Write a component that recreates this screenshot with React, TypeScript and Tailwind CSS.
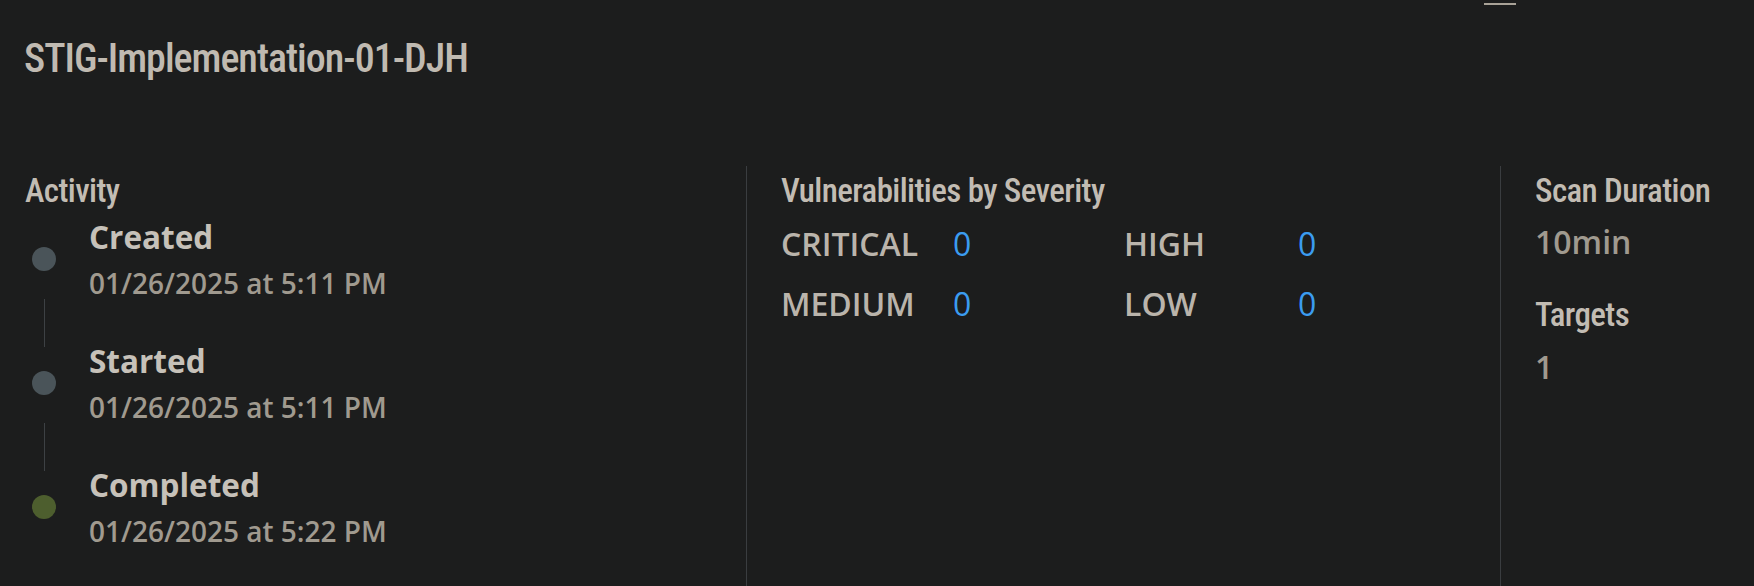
import React from "react";

const cond = "font-['Roboto',sans-serif] font-stretch-[75%] font-medium";
const body = "font-['Open_Sans','Noto_Sans',sans-serif]";

type Ev = { label: string; date: string; dot: string };

const events: Ev[] = [
  { label: "Created", date: "01/26/2025 at 5:11 PM", dot: "bg-[#4a5459]" },
  { label: "Started", date: "01/26/2025 at 5:11 PM", dot: "bg-[#4a5459]" },
  { label: "Completed", date: "01/26/2025 at 5:22 PM", dot: "bg-[#4d5e2e]" },
];

function Heading({ children }: { children: React.ReactNode }) {
  return (
    <div className={`${cond} text-[33px] leading-none tracking-[-0.6px] text-[#c2bcb3] whitespace-nowrap`}>
      {children}
    </div>
  );
}

export default function App() {
  return (
    <div className={`relative w-full h-[586px] overflow-hidden bg-[#1c1d1d] ${body}`}>
      <div className="absolute left-[1484px] top-[3px] w-[32px] h-[2px] bg-[#a8a297]" />

      <div className={`${cond} pl-[24px] pt-[39px] text-[40px] leading-none tracking-[-1px] text-[#c0bab1]`}>
        STIG-Implementation-01-DJH
      </div>

      <div className="mt-[87px] flex h-[420px]">
        <div className="w-[746px] shrink-0 pl-[25px] pt-[8px]">
          <Heading>Activity</Heading>
          <div className="mt-[10px] flex flex-col">
            {events.map((e, i) => (
              <React.Fragment key={e.label}>
                {i > 0 && (
                  <div className="-mt-[2px] -mb-[6px] h-[48px] pl-[19px]">
                    <div className="h-full w-px bg-[#3d4144]" />
                  </div>
                )}
                <div className="flex h-[84px] items-center">
                  <div className="ml-[7px] h-[24px] w-[24px] shrink-0 rounded-full">
                    <div className={`h-full w-full rounded-full ${e.dot}`} />
                  </div>
                  <div className="ml-[33px] flex flex-col">
                    <div className="text-[31.5px] font-bold leading-[40px] text-[#c6c1b9]">{e.label}</div>
                    <div className="mt-[8px] text-[28px] font-semibold leading-[36px] text-[#a09a8f]">
                      {e.date}
                    </div>
                  </div>
                </div>
              </React.Fragment>
            ))}
          </div>
        </div>

        <div className="w-[754px] shrink-0 border-l border-[#3a3d40] pl-[34px] pt-[8px]">
          <Heading>Vulnerabilities by Severity</Heading>
          <div className="mt-[17px] grid grid-cols-[172px_171px_174px_auto] gap-y-[20px] text-[32px] leading-[40px]">
            <div className="font-semibold text-[#bab4ab]">CRITICAL</div>
            <div className="font-medium text-[#3b9cf0]">0</div>
            <div className="font-semibold text-[#bab4ab]">HIGH</div>
            <div className="font-medium text-[#3b9cf0]">0</div>
            <div className="font-semibold text-[#bab4ab]">MEDIUM</div>
            <div className="font-medium text-[#3b9cf0]">0</div>
            <div className="font-semibold text-[#bab4ab]">LOW</div>
            <div className="font-medium text-[#3b9cf0]">0</div>
          </div>
        </div>

        <div className="flex-1 border-l border-[#3a3d40] pl-[34px] pt-[8px]">
          <Heading>Scan Duration</Heading>
          <div className="mt-[15px] text-[32px] font-semibold leading-[40px] text-[#a09a8f]">10min</div>
          <div className="mt-[36px]">
            <Heading>Targets</Heading>
          </div>
          <div className="mt-[16px] text-[32px] font-semibold leading-[40px] text-[#a09a8f]">1</div>
        </div>
      </div>
    </div>
  );
}
